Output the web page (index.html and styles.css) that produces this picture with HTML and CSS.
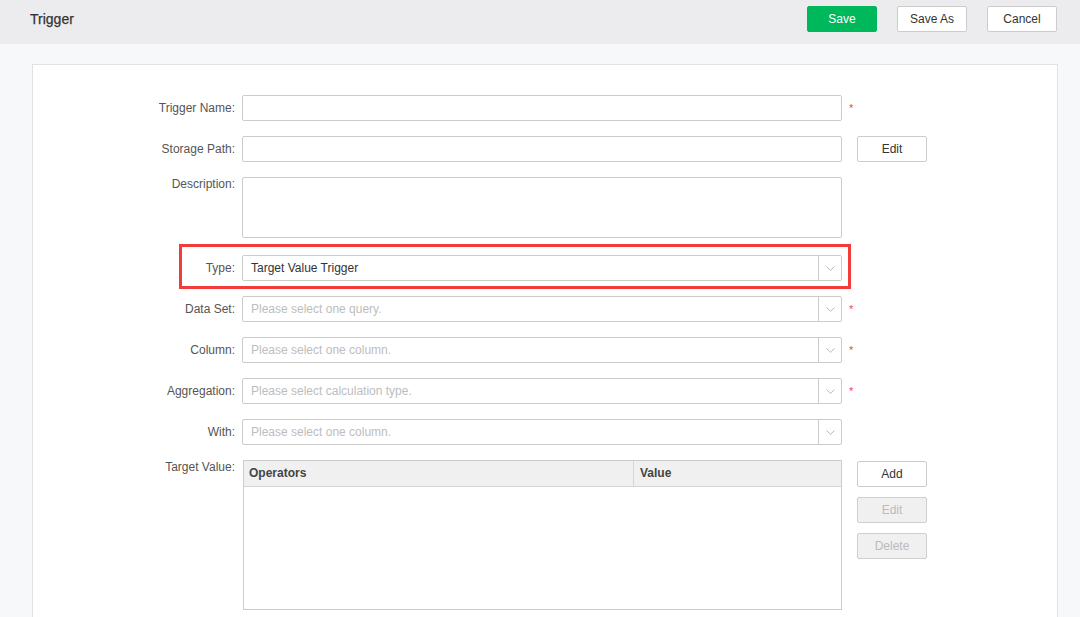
FILE: index.html
```html
<!DOCTYPE html>
<html lang="en">
<head>
<meta charset="utf-8">
<title>Trigger</title>
<link rel="stylesheet" href="styles.css">
</head>
<body>
<header class="topbar">
  <div class="title">Trigger</div>
  <div class="actions">
    <button class="btn btn-primary">Save</button>
    <button class="btn">Save As</button>
    <button class="btn">Cancel</button>
  </div>
</header>
<main class="content">
  <section class="card">
    <div class="row">
      <label class="label">Trigger Name:</label>
      <div class="field"><input class="input" type="text"></div>
      <div class="side"><span class="req">*</span></div>
    </div>
    <div class="row">
      <label class="label">Storage Path:</label>
      <div class="field"><input class="input" type="text"></div>
      <div class="side"><button class="btn side-btn">Edit</button></div>
    </div>
    <div class="row row-desc">
      <label class="label label-top">Description:</label>
      <div class="field"><textarea class="textarea"></textarea></div>
      <div class="side"></div>
    </div>
    <div class="row row-type">
      <label class="label">Type:</label>
      <div class="field">
        <div class="select"><span class="value">Target Value Trigger</span><span class="arrow"><svg width="9" height="5" viewBox="0 0 9 5"><polyline points="0.5,0.5 4.5,4.3 8.5,0.5" fill="none" stroke="#b8b8b8" stroke-width="1"/></svg></span></div>
      </div>
      <div class="side"></div>
      <span class="highlight"></span>
    </div>
    <div class="row">
      <label class="label">Data Set:</label>
      <div class="field">
        <div class="select"><span class="placeholder">Please select one query.</span><span class="arrow"><svg width="9" height="5" viewBox="0 0 9 5"><polyline points="0.5,0.5 4.5,4.3 8.5,0.5" fill="none" stroke="#b8b8b8" stroke-width="1"/></svg></span></div>
      </div>
      <div class="side"><span class="req">*</span></div>
    </div>
    <div class="row">
      <label class="label">Column:</label>
      <div class="field">
        <div class="select"><span class="placeholder">Please select one column.</span><span class="arrow"><svg width="9" height="5" viewBox="0 0 9 5"><polyline points="0.5,0.5 4.5,4.3 8.5,0.5" fill="none" stroke="#b8b8b8" stroke-width="1"/></svg></span></div>
      </div>
      <div class="side"><span class="req">*</span></div>
    </div>
    <div class="row">
      <label class="label">Aggregation:</label>
      <div class="field">
        <div class="select"><span class="placeholder">Please select calculation type.</span><span class="arrow"><svg width="9" height="5" viewBox="0 0 9 5"><polyline points="0.5,0.5 4.5,4.3 8.5,0.5" fill="none" stroke="#b8b8b8" stroke-width="1"/></svg></span></div>
      </div>
      <div class="side"><span class="req">*</span></div>
    </div>
    <div class="row">
      <label class="label">With:</label>
      <div class="field">
        <div class="select"><span class="placeholder">Please select one column.</span><span class="arrow"><svg width="9" height="5" viewBox="0 0 9 5"><polyline points="0.5,0.5 4.5,4.3 8.5,0.5" fill="none" stroke="#b8b8b8" stroke-width="1"/></svg></span></div>
      </div>
      <div class="side"></div>
    </div>
    <div class="row">
      <label class="label label-top">Target Value:</label>
      <div class="field">
        <div class="table">
          <div class="thead">
            <div class="th th-op">Operators</div>
            <div class="th th-val">Value</div>
          </div>
          <div class="tbody"></div>
        </div>
      </div>
      <div class="side side-stack">
        <button class="btn side-btn">Add</button>
        <button class="btn side-btn" disabled>Edit</button>
        <button class="btn side-btn" disabled>Delete</button>
      </div>
    </div>
  </section>
</main>
</body>
</html>
```

FILE: styles.css
```css
* { box-sizing: border-box; }

html, body {
  margin: 0;
  padding: 0;
}

body {
  background: #f7f8fa;
  font-family: "Liberation Sans", Arial, sans-serif;
  font-size: 12px;
  color: #333;
  overflow: hidden;
}

.topbar {
  height: 44px;
  background: #ececee;
  display: flex;
  justify-content: space-between;
  align-items: flex-start;
  padding: 6px 23px 0 30px;
}

.title {
  font-size: 14px;
  line-height: 26px;
  color: #333;
  -webkit-text-stroke: 0.25px #333;
}

.actions {
  display: flex;
  gap: 20px;
}

.btn {
  width: 70px;
  height: 26px;
  border: 1px solid #cccccc;
  border-radius: 2px;
  background: #fff;
  color: #333;
  font-family: "Liberation Sans", Arial, sans-serif;
  font-size: 12px;
  padding: 0;
  cursor: pointer;
}

.btn-primary {
  background: #00b85c;
  border-color: #00b85c;
  color: #fff;
}

.btn:disabled {
  background: #f0f0f0;
  color: #bbbbbb;
  border-color: #cfcfcf;
  cursor: default;
}

.content {
  padding: 20px 22px 0 32px;
}

.card {
  background: #fff;
  border: 1px solid #e2e2e2;
  padding: 30px 0 60px;
  display: flex;
  flex-direction: column;
  gap: 15px;
  min-height: 600px;
}

.row {
  display: flex;
  align-items: flex-start;
  position: relative;
}

.row-desc {
  margin-bottom: 2px;
}

.label {
  width: 202px;
  margin-right: 7px;
  text-align: right;
  line-height: 26px;
  color: #555;
  font-size: 12px;
  flex: none;
}

.label-top {
  line-height: 14px;
  padding-top: 0;
}

.field {
  width: 600px;
  flex: none;
}

.input {
  display: block;
  width: 100%;
  height: 26px;
  border: 1px solid #cccccc;
  border-radius: 2px;
  padding: 0 8px;
  font-family: inherit;
  font-size: 12px;
  outline: none;
  background: #fff;
}

.textarea {
  display: block;
  width: 100%;
  height: 61px;
  border: 1px solid #cccccc;
  border-radius: 2px;
  padding: 4px 8px;
  font-family: inherit;
  font-size: 12px;
  resize: none;
  outline: none;
}

.select {
  display: flex;
  height: 26px;
  border: 1px solid #cccccc;
  border-radius: 2px;
  background: #fff;
}

.select .value,
.select .placeholder {
  flex: 1;
  padding-left: 8px;
  line-height: 24px;
  font-size: 12px;
  white-space: nowrap;
}

.select .value {
  color: #333;
}

.select .placeholder {
  color: #bdbdbd;
}

.arrow {
  width: 23px;
  border-left: 1px solid #cccccc;
  display: flex;
  align-items: center;
  justify-content: center;
  flex: none;
}

.side {
  padding-left: 7px;
  display: flex;
  flex-direction: column;
}

.req {
  color: #f04848;
  font-size: 11px;
  line-height: 26px;
}

.side-btn {
  margin-left: 8px;
}

.side-stack {
  gap: 10px;
  padding-top: 1px;
}

.table {
  margin-left: 1px;
  height: 150px;
  border: 1px solid #cccccc;
  display: flex;
  flex-direction: column;
}

.thead {
  display: flex;
  height: 26px;
  background: #f0f0f0;
  border-bottom: 1px solid #d6d6d6;
  flex: none;
}

.th {
  font-weight: bold;
  color: #444;
  font-size: 12px;
  line-height: 25px;
  padding-left: 5px;
}

.th-op {
  width: 390px;
  border-right: 1px solid #d6d6d6;
}

.th-val {
  flex: 1;
  padding-left: 6px;
}

.tbody {
  flex: 1;
}

.highlight {
  position: absolute;
  left: 146px;
  top: -11px;
  width: 672px;
  height: 45px;
  border: 3px solid #f23c3c;
  pointer-events: none;
}
```
